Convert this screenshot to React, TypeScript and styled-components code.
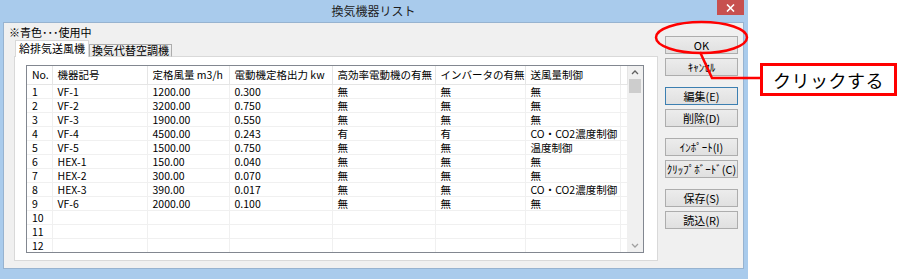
import styled, { createGlobalStyle } from "styled-components";

const GlobalStyle = createGlobalStyle`
  html, body {
    margin: 0;
    padding: 0;
    background: #fff;
  }
  body {
    font-family: "Noto Sans CJK JP", "Noto Sans", sans-serif;
  }
`;

const Page = styled.div`
  position: relative;
  width: 900px;
  height: 279px;
  overflow: hidden;
  background: #fff;
`;

const Window = styled.div`
  width: 748px;
  height: 279px;
  box-sizing: border-box;
  background: #a9cbec;
  padding: 0 4px 10px 3px;
  display: flex;
  flex-direction: column;
`;

const TitleBar = styled.div`
  height: 22px;
  display: grid;
  grid-template-columns: 1fr auto 1fr;
  align-items: start;
`;

const Title = styled.div`
  grid-column: 2;
  font-size: 12px;
  line-height: 22px;
  color: #1e1e1e;
`;

const CloseButton = styled.div`
  grid-column: 3;
  justify-self: end;
  width: 27px;
  height: 15px;
  background: #c7504f;
  display: flex;
  align-items: center;
  justify-content: center;
`;

const Client = styled.div`
  flex: 1;
  background: #f0f0f0;
  border: 1px solid #97b3d0;
  display: flex;
  gap: 7px;
  padding: 3px 5px 7px 0;
`;

const LeftColumn = styled.div`
  width: 654px;
  display: flex;
  flex-direction: column;
`;

const Legend = styled.div`
  font-size: 11px;
  line-height: 13px;
  padding-left: 5px;
  margin-bottom: 2px;
  color: #000;
`;

const TabArea = styled.div`
  flex: 1;
  margin-left: 10px;
  display: flex;
  flex-direction: column;
`;

const TabRow = styled.div`
  display: flex;
  align-items: flex-end;
  height: 16px;
  padding-left: 1px;
  margin-bottom: -1px;
  position: relative;
  z-index: 1;
`;

const Tab = styled.div<{ $active?: boolean }>`
  box-sizing: border-box;
  height: ${(p) => (p.$active ? "17px" : "13px")};
  padding: 0 ${(p) => (p.$active ? "3px" : "2px")};
  border: 1px solid ${(p) => (p.$active ? "#d9d9d9" : "#acacac")};
  border-bottom: ${(p) => (p.$active ? "none" : "1px solid #d9d9d9")};
  background: ${(p) => (p.$active ? "#fff" : "linear-gradient(#f2f2f2, #e6e6e6)")};
  font-size: 11px;
  line-height: ${(p) => (p.$active ? "14px" : "11px")};
  color: #000;
  white-space: nowrap;
`;

const TabPanel = styled.div`
  flex: 1;
  background: #fff;
  border: 1px solid #d9d9d9;
  padding: 8px 13px 6px 11px;
`;

const ListBox = styled.div`
  width: 618px;
  height: 188px;
  box-sizing: border-box;
  border: 1px solid #828790;
  display: flex;
  overflow: hidden;
`;

const Table = styled.table`
  width: 600px;
  border-collapse: collapse;
  table-layout: fixed;
  font-size: 10.5px;
  align-self: flex-start;
`;

const HeadCell = styled.th`
  height: 18px;
  box-sizing: border-box;
  padding: 0 0 0 5px;
  border-right: 1px solid #e5e5e5;
  border-bottom: 1px solid #e5e5e5;
  font-weight: normal;
  text-align: left;
  white-space: nowrap;
  overflow: hidden;
  color: #000;
  line-height: 16px;
`;

const Cell = styled.td`
  height: 14px;
  box-sizing: border-box;
  padding: 0 0 0 5px;
  border-right: 1px solid #f0f0f0;
  border-bottom: 1px solid #f0f0f0;
  white-space: nowrap;
  overflow: hidden;
  color: #000;
  line-height: 13px;
`;

const ScrollBar = styled.div`
  width: 16px;
  background: #f0f0f0;
  display: flex;
  flex-direction: column;
  align-items: center;
`;

const ScrollArrow = styled.div`
  height: 13px;
  display: flex;
  align-items: center;
  justify-content: center;
`;

const ScrollThumb = styled.div`
  width: 12px;
  height: 14px;
  background: #cdcdcd;
`;

const ScrollTrack = styled.div`
  flex: 1;
`;

const ButtonColumn = styled.div`
  width: 73px;
  padding-top: 10px;
  display: flex;
  flex-direction: column;
  gap: 11px;
`;

const ButtonPair = styled.div`
  display: flex;
  flex-direction: column;
  gap: 4px;
`;

const DialogButton = styled.button<{ $focused?: boolean }>`
  width: 73px;
  height: 18px;
  box-sizing: border-box;
  padding: 0;
  border: 1px solid ${(p) => (p.$focused ? "#3c7fb1" : "#adadad")};
  background: linear-gradient(#ececec, #e0e0e0);
  font-family: "Noto Sans CJK JP", "Noto Sans", sans-serif;
  font-size: 11px;
  line-height: 16px;
  color: #000;
  white-space: nowrap;
`;

const Annotation = styled.svg`
  position: absolute;
  left: 0;
  top: 0;
  pointer-events: none;
`;

const Callout = styled.div`
  position: absolute;
  left: 760px;
  top: 63px;
  width: 137px;
  height: 33px;
  box-sizing: border-box;
  border: 3px solid #ff0000;
  background: #fff;
  display: flex;
  align-items: center;
  justify-content: center;
  font-size: 18px;
  color: #000;
  letter-spacing: 0.5px;
`;

const columns = [25, 95, 82, 103, 103, 90, 95, 7];
const headers = [
  "No.",
  "機器記号",
  "定格風量 m3/h",
  "電動機定格出力 kw",
  "高効率電動機の有無",
  "インバータの有無",
  "送風量制御",
  "",
];

const rows: string[][] = [
  ["1", "VF-1", "1200.00", "0.300", "無", "無", "無"],
  ["2", "VF-2", "3200.00", "0.750", "無", "無", "無"],
  ["3", "VF-3", "1900.00", "0.550", "無", "無", "無"],
  ["4", "VF-4", "4500.00", "0.243", "有", "有", "CO・CO2濃度制御"],
  ["5", "VF-5", "1500.00", "0.750", "無", "無", "温度制御"],
  ["6", "HEX-1", "150.00", "0.040", "無", "無", "無"],
  ["7", "HEX-2", "300.00", "0.070", "無", "無", "無"],
  ["8", "HEX-3", "390.00", "0.017", "無", "無", "CO・CO2濃度制御"],
  ["9", "VF-6", "2000.00", "0.100", "無", "無", "無"],
  ["10", "", "", "", "", "", ""],
  ["11", "", "", "", "", "", ""],
  ["12", "", "", "", "", "", ""],
];

const buttonGroups = [
  [{ label: "OK" }, { label: "ｷｬﾝｾﾙ" }],
  [{ label: "編集(E)", focused: true }, { label: "削除(D)" }],
  [{ label: "ｲﾝﾎﾟｰﾄ(I)" }, { label: "ｸﾘｯﾌﾟﾎﾞｰﾄﾞ(C)" }],
  [{ label: "保存(S)" }, { label: "読込(R)" }],
];

const Chevron = ({ up }: { up?: boolean }) => (
  <svg width="8" height="5" viewBox="0 0 8 5">
    <path
      d={up ? "M1 4 L4 1 L7 4" : "M1 1 L4 4 L7 1"}
      fill="none"
      stroke={up ? "#606060" : "#a0a0a0"}
      strokeWidth="1.3"
    />
  </svg>
);

const App = () => {
  return (
    <Page>
      <GlobalStyle />
      <Window>
        <TitleBar>
          <Title>換気機器リスト</Title>
          <CloseButton>
            <svg width="9" height="8" viewBox="0 0 9 8">
              <path d="M1 0.5 L8 7.5 M8 0.5 L1 7.5" stroke="#fff" strokeWidth="1.6" />
            </svg>
          </CloseButton>
        </TitleBar>
        <Client>
          <LeftColumn>
            <Legend>※青色･･･使用中</Legend>
            <TabArea>
              <TabRow>
                <Tab $active>給排気送風機</Tab>
                <Tab>換気代替空調機</Tab>
              </TabRow>
              <TabPanel>
                <ListBox>
                  <Table>
                    <colgroup>
                      {columns.map((w, i) => (
                        <col key={i} style={{ width: w }} />
                      ))}
                    </colgroup>
                    <thead>
                      <tr>
                        {headers.map((h, i) => (
                          <HeadCell key={i}>{h}</HeadCell>
                        ))}
                      </tr>
                    </thead>
                    <tbody>
                      {rows.map((r, i) => (
                        <tr key={i}>
                          {r.map((c, j) => (
                            <Cell key={j}>{c}</Cell>
                          ))}
                          <Cell />
                        </tr>
                      ))}
                    </tbody>
                  </Table>
                  <ScrollBar>
                    <ScrollArrow>
                      <Chevron up />
                    </ScrollArrow>
                    <ScrollThumb />
                    <ScrollTrack />
                    <ScrollArrow>
                      <Chevron />
                    </ScrollArrow>
                  </ScrollBar>
                </ListBox>
              </TabPanel>
            </TabArea>
          </LeftColumn>
          <ButtonColumn>
            {buttonGroups.map((group, i) => (
              <ButtonPair key={i}>
                {group.map((b) => (
                  <DialogButton key={b.label} $focused={"focused" in b}>
                    {b.label}
                  </DialogButton>
                ))}
              </ButtonPair>
            ))}
          </ButtonColumn>
        </Client>
      </Window>
      <Annotation width="900" height="279" viewBox="0 0 900 279">
        <ellipse cx="701.5" cy="37.5" rx="45.5" ry="15.5" fill="none" stroke="#ff0000" strokeWidth="2.5" />
        <polyline points="700,52 712,78 760,78" fill="none" stroke="#ff0000" strokeWidth="2.5" />
      </Annotation>
      <Callout>クリックする</Callout>
    </Page>
  );
};

export default App;
